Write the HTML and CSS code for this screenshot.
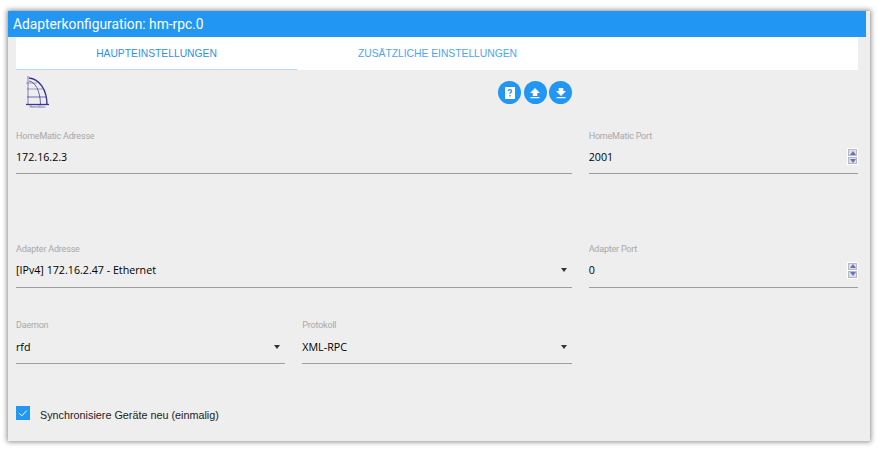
FILE: index.html
```html
<!DOCTYPE html>
<html lang="de">
<head>
<meta charset="utf-8">
<title>Adapterkonfiguration: hm-rpc.0</title>
<link rel="stylesheet" href="styles.css">
</head>
<body>
<div class="window">
  <div class="title">Adapterkonfiguration: hm-rpc.0</div>
  <div class="content">
    <div class="tabs">
      <div class="tab active">HAUPTEINSTELLUNGEN</div>
      <div class="tab">ZUSÄTZLICHE EINSTELLUNGEN</div>
    </div>
    <div class="toolbar">
      <svg class="logo" viewBox="0 0 30 34" width="30" height="34">
        <g fill="none" stroke="#3a3296">
          <path d="M6 1V30" stroke-width="1" opacity=".6"/>
          <path d="M7 3C17 4 25 14 25 30" stroke-width="1.400"/>
          <path d="M7 6C13 7 18 15 18.500 29" stroke-width="1" opacity=".75"/>
          <path d="M4 8H15M5 14H21" stroke-width="1" opacity=".45"/>
          <path d="M5 22H24" stroke-width="1" opacity=".7"/>
          <path d="M4 29.500H27" stroke-width="1.300"/>
        </g>
        <text class="logo-text" x="15.500" y="33" text-anchor="middle">HomeMatic</text>
      </svg>
      <div class="actions">
        <button class="round" aria-label="Hilfe">
          <svg viewBox="0 0 14 14" width="14" height="14"><path fill="#fff" fill-rule="evenodd" d="M2 1h10v12H2zM7 3C5.500 3 4.700 3.900 4.700 5h1.400c0-.5.300-.8.900-.8s.9.300.9.800c0 .9-1.500 1-1.500 2.700v.3h1.300v-.3c0-1.100 1.600-1.300 1.600-2.800C9.300 3.800 8.400 3 7 3zM6.300 9v1.400h1.400V9z"/></svg>
        </button>
        <button class="round" aria-label="Hochladen">
          <svg viewBox="0 0 14 14" width="14" height="14"><path fill="#fff" d="M7 2 12 7H9.300v3H4.700V7H2zM2.500 11h9v1.200h-9z"/></svg>
        </button>
        <button class="round" aria-label="Herunterladen">
          <svg viewBox="0 0 14 14" width="14" height="14"><path fill="#fff" d="M4.700 2h4.600v3H12L7 10 2 5h2.700zM2.500 11h9v1.200h-9z"/></svg>
        </button>
      </div>
    </div>
    <div class="form">
      <div class="row row-address">
        <div class="field span2">
          <label class="label">HomeMatic Adresse</label>
          <div class="control"><span>172.16.2.3</span></div>
        </div>
        <div class="field">
          <label class="label">HomeMatic Port</label>
          <div class="control"><span>2001</span><span class="spin"><i class="up"></i><i class="down"></i></span></div>
        </div>
      </div>
      <div class="row row-adapter">
        <div class="field span2">
          <label class="label">Adapter Adresse</label>
          <div class="control"><span>[IPv4] 172.16.2.47 - Ethernet</span><i class="caret"></i></div>
        </div>
        <div class="field">
          <label class="label">Adapter Port</label>
          <div class="control"><span>0</span><span class="spin"><i class="up"></i><i class="down"></i></span></div>
        </div>
      </div>
      <div class="row row-daemon">
        <div class="field">
          <label class="label">Daemon</label>
          <div class="control"><span>rfd</span><i class="caret"></i></div>
        </div>
        <div class="field">
          <label class="label">Protokoll</label>
          <div class="control"><span>XML-RPC</span><i class="caret"></i></div>
        </div>
      </div>
      <div class="check">
        <span class="box"><svg viewBox="0 0 14 14" width="14" height="14"><path d="M3.200 7.300 5.800 9.800 10.800 4.500" fill="none" stroke="#fff" stroke-width="1"/></svg></span>
        <span class="check-label">Synchronisiere Geräte neu (einmalig)</span>
      </div>
    </div>
  </div>
</div>
</body>
</html>
```
FILE: styles.css
```css
* { box-sizing: border-box; }
html, body { height: 100%; }
body {
  margin: 0;
  padding: 11px 8px 8px;
  background: #fff;
  overflow: hidden;
  font-family: "Open Sans", "Liberation Sans", sans-serif;
}
.window {
  width: 862px;
  height: 430px;
  background: #eee;
  box-shadow: 0 0 5px 1px rgba(0, 0, 0, .45);
  border-right: 4px solid #eee;
}
.title {
  height: 26px;
  padding-left: 5px;
  background: #2196f3;
  color: #fff;
  font: 13.800px/26px Roboto, sans-serif;
}
.content { padding: 0 8px; }
.tabs {
  display: grid;
  grid-template-columns: 281px 281px 1fr;
  height: 33px;
  background: #fff;
}
.tab {
  height: 33px;
  padding-top: 10px;
  text-align: center;
  color: #4aa5f5;
  font: 10.300px/14px "Liberation Sans", sans-serif;
}
.tab.active {
  color: #2e8fe8;
  border-bottom: 1px solid #b5d8f3;
}
.toolbar {
  height: 53px;
  padding: 5px 0 0 6px;
  position: relative;
}
.logo { display: block; }
.logo-text { font: 3.200px "Liberation Sans", sans-serif; fill: #5a5590; }
.actions {
  position: absolute;
  top: 11px;
  left: 482px;
  display: flex;
  gap: 2.500px;
}
.round {
  width: 23px;
  height: 23px;
  padding: 0;
  border: 0;
  border-radius: 50%;
  background: #2196f3;
  display: flex;
  align-items: center;
  justify-content: center;
}
.form { display: flex; flex-direction: column; }
.row {
  display: grid;
  grid-template-columns: repeat(3, 1fr);
  column-gap: 17px;
}
.row-address { margin-top: 6px; }
.row-adapter { margin-top: 68px; }
.row-daemon { margin-top: 30px; }
.span2 { grid-column: span 2; }
.field { display: flex; flex-direction: column; height: 45px; }
.row-adapter .field, .row-daemon .field { height: 46px; }
.label {
  height: 13px;
  color: #a8a8a8;
  font: 9px/15px Roboto, sans-serif;
  letter-spacing: -.2px;
}
.control {
  flex: 1;
  display: flex;
  align-items: center;
  justify-content: space-between;
  border-bottom: 1px solid #9e9e9e;
  color: #000;
  font: 10.700px/16px "Open Sans", sans-serif;
}
.row-address .control, .row-adapter .control { padding-bottom: 2px; }
.spin {
  width: 11px;
  height: 17px;
  padding: 1px;
  display: flex;
  flex-direction: column;
  gap: 1px;
  background: #fff;
}
.spin i {
  flex: 1;
  display: flex;
  align-items: center;
  justify-content: center;
  background: #dedee8;
  border: 1px solid #b8b8c4;
}
.spin i::after {
  content: "";
  border-left: 3px solid transparent;
  border-right: 3px solid transparent;
}
.spin .up::after { border-bottom: 4px solid #6575b8; }
.spin .down::after { border-top: 4px solid #6575b8; }
.caret {
  width: 0;
  height: 0;
  margin-right: 5px;
  border-left: 3.500px solid transparent;
  border-right: 3.500px solid transparent;
  border-top: 4px solid #333;
}
.check {
  display: flex;
  align-items: center;
  gap: 10px;
  margin-top: 42px;
  height: 14px;
}
.box {
  width: 14px;
  height: 14px;
  background: #2196f3;
  display: flex;
}
.check-label {
  margin-top: 3px;
  color: #222;
  font: 10.800px/14px "Liberation Sans", sans-serif;
}
```
